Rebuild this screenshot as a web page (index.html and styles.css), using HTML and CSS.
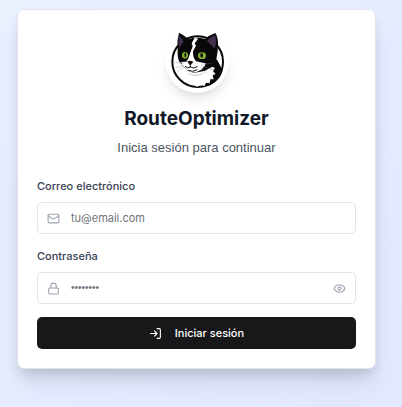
FILE: index.html
```html
<!DOCTYPE html>
<html lang="es">
<head>
<meta charset="utf-8">
<meta name="viewport" content="width=device-width, initial-scale=1">
<title>RouteOptimizer</title>
<link rel="stylesheet" href="styles.css">
</head>
<body>
<main class="card">
  <header class="header">
    <div class="logo">
      <svg viewBox="24 27 192 192" aria-hidden="true">
        <circle cx="122" cy="125" r="76" fill="#fff" stroke="#080808" stroke-width="6"/>
        <path d="M166 104L182 122L190 138L197 150Q193 178 160 196L132 202L150 180L160 145Z" fill="#090909"/>
        <path d="M76 142L66 158L74 160L70 172L80 174L80 184L92 184L98 194L110 192L120 201L132 193L142 199L147 188L158 190L160 178L170 178L167 166L176 162L168 154L174 144L156 136Z" fill="#fff"/>
        <path d="M84 154Q105 172 144 156L132 165L113 168L96 164Z" fill="#d9d4cd"/>
        <path d="M66 38Q59 63 62 86Q61 112 66 123L77 137L91 151Q104 161 122 157L144 152L166 140L178 117Q184 91 183 69Q182 49 175 39Q157 45 144 57Q119 50 94 57Q80 44 66 38Z" fill="#090909"/>
        <path d="M67 47Q62 66 67 83L80 65Q76 54 67 47ZM174 46Q158 51 150 62L173 86Q180 66 174 46Z" fill="#41304d"/>
        <path d="M114 52L123 57L113 70L117 77L108 94Q107 112 117 124L130 127L146 130L143 138L133 149L119 156Q101 159 90 149L77 137L72 126L88 125L94 115L101 95L107 79L104 70Z" fill="#fff"/>
        <path d="M72 99Q82 89 95 102L93 118Q78 120 72 99ZM120 105Q132 90 151 100Q147 120 126 119Z" fill="#090909"/>
        <ellipse cx="84" cy="106" rx="9" ry="10" fill="#83b52b"/>
        <ellipse cx="135" cy="107" rx="12" ry="10" fill="#83b52b"/>
        <ellipse cx="85" cy="105" rx="3" ry="7" fill="#111"/>
        <ellipse cx="134" cy="106" rx="4" ry="7" fill="#111"/>
        <path d="M91 124Q99 120 109 125L102 134H97Z" fill="#17110f"/>
        <path d="M100 132V141Q91 147 84 139M100 141Q110 148 122 139M93 151Q107 158 121 149" fill="none" stroke="#111" stroke-width="3"/>
        <path d="M82 131L51 126M81 137L55 143M82 142L61 153M132 133L166 130M133 138L170 149M130 142L150 161" fill="none" stroke="#777" stroke-width="1"/>
      </svg>
    </div>
    <h1 class="title">RouteOptimizer</h1>
    <p class="subtitle">Inicia sesión para continuar</p>
  </header>
  <form class="form">
    <div class="field">
      <label for="email">Correo electrónico</label>
      <div class="control">
        <svg class="icon" viewBox="0 0 24 24" aria-hidden="true"><rect x="2" y="4" width="20" height="16" rx="2"/><path d="m22 7-8.97 5.700a1.940 1.940 0 0 1-2.060 0L2 7"/></svg>
        <input id="email" type="email" placeholder="tu@email.com">
      </div>
    </div>
    <div class="field">
      <label for="password">Contraseña</label>
      <div class="control">
        <svg class="icon" viewBox="0 0 24 24" aria-hidden="true"><rect x="3" y="11" width="18" height="11" rx="2"/><path d="M7 11V7a5 5 0 0 1 10 0v4"/></svg>
        <input id="password" type="password" placeholder="••••••••">
        <button class="reveal" type="button" aria-label="Mostrar contraseña">
          <svg class="icon" viewBox="0 0 24 24" aria-hidden="true"><path d="M2 12a10.750 10.750 0 0 1 20 0 10.750 10.750 0 0 1-20 0"/><circle cx="12" cy="12" r="3"/></svg>
        </button>
      </div>
    </div>
    <button class="submit" type="submit">
      <svg class="icon" viewBox="0 0 24 24" aria-hidden="true"><path d="M15 3h4a2 2 0 0 1 2 2v14a2 2 0 0 1-2 2h-4M10 17l5-5-5-5M15 12H3"/></svg>
      Iniciar sesión
    </button>
  </form>
</main>
</body>
</html>
```
FILE: styles.css
```css
* {
  box-sizing: border-box;
}

body {
  min-height: 100vh;
  margin: 0;
  padding: 9px 26px 38px 17px;
  background: linear-gradient(135deg, #e9f1ff, #e1e8ff);
  font-family: Inter, "Liberation Sans", sans-serif;
  color: #111827;
}

.card {
  padding: 19px;
  border: 1px solid #e2e4e9;
  border-radius: 7px;
  background: #fff;
  box-shadow: 0 8px 12px -3px rgb(0 0 0 / 12%), 0 16px 24px -4px rgb(0 0 0 / 10%);
}

.header {
  display: flex;
  flex-direction: column;
  align-items: center;
  text-align: center;
}

.logo {
  width: 64px;
  height: 64px;
  border-radius: 50%;
  background: #fff;
  box-shadow: 0 8px 12px -2px rgb(0 0 0 / 10%), 0 3px 5px -3px rgb(0 0 0 / 10%);
}

.logo svg {
  display: block;
  width: 100%;
}

.title {
  margin: 14px 0 0;
  font-size: 19px;
  font-weight: 700;
  line-height: 24px;
}

.subtitle {
  margin: 7px 0 0;
  font-family: "Liberation Sans", sans-serif;
  font-size: 13px;
  line-height: 20px;
  color: #4b5563;
}

.form {
  display: grid;
  gap: 13px;
  margin-top: 19px;
}

.field {
  display: grid;
  gap: 7px;
}

label {
  font-size: 11px;
  font-weight: 500;
  line-height: 18px;
  color: #374151;
}

.control {
  display: flex;
  align-items: center;
  gap: 11px;
  height: 32px;
  padding: 0 9px;
  border: 1px solid #e4e4e7;
  border-radius: 5px;
  background: #fff;
}

.icon {
  flex: none;
  display: block;
  width: 13px;
  height: 13px;
  fill: none;
  stroke: #9ca3af;
  stroke-width: 2;
  stroke-linecap: round;
  stroke-linejoin: round;
}

input {
  flex: 1;
  min-width: 0;
  padding: 0;
  border: 0;
  outline: 0;
  background: transparent;
  font: 11px/16px Inter, "Liberation Sans", sans-serif;
  color: #111827;
}

input[type="password"] {
  font-family: "Liberation Sans", sans-serif;
  font-size: 10px;
}

input::placeholder {
  color: #71717a;
  opacity: 1;
}

.reveal {
  padding: 0;
  border: 0;
  background: none;
}

.submit {
  display: flex;
  align-items: center;
  justify-content: center;
  gap: 13px;
  height: 32px;
  border: 0;
  border-radius: 5px;
  background: #18181b;
  color: #fff;
  font: 500 11px/16px Inter, "Liberation Sans", sans-serif;
}

.submit .icon {
  stroke: #fff;
}
```
